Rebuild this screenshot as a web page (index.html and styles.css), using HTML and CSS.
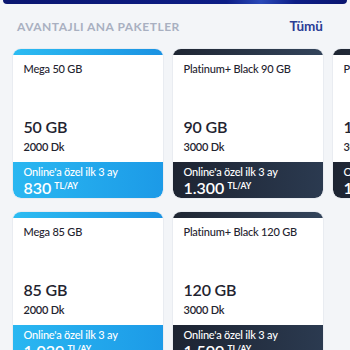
FILE: index.html
```html
<!DOCTYPE html>
<html lang="tr">
<head>
  <meta charset="UTF-8" />
  <meta name="viewport" content="width=device-width, initial-scale=1" />
  <title>Avantajlı Ana Paketler</title>
  <link rel="stylesheet" href="styles.css">
</head>
<body>
  <div class="hero"></div>

  <div class="section-head">
    <h2 class="section-title">AVANTAJLI ANA PAKETLER</h2>
    <a href="#" class="see-all">Tümü</a>
  </div>

  <div class="packages">
    <div class="card blue">
      <div class="card-top"></div>
      <div class="card-body">
        <div class="card-name">Mega 50 GB</div>
        <div class="card-info">
          <div class="gb">50 GB</div>
          <div class="dk">2000 Dk</div>
        </div>
      </div>
      <div class="card-price">
        <div class="promo">Online'a özel ilk 3 ay</div>
        <div class="price">830<span class="unit">TL/AY</span></div>
      </div>
    </div>

    <div class="card blue">
      <div class="card-top"></div>
      <div class="card-body">
        <div class="card-name">Mega 85 GB</div>
        <div class="card-info">
          <div class="gb">85 GB</div>
          <div class="dk">2000 Dk</div>
        </div>
      </div>
      <div class="card-price">
        <div class="promo">Online'a özel ilk 3 ay</div>
        <div class="price">1.020<span class="unit">TL/AY</span></div>
      </div>
    </div>

    <div class="card dark">
      <div class="card-top"></div>
      <div class="card-body">
        <div class="card-name">Platinum+ Black 90 GB</div>
        <div class="card-info">
          <div class="gb">90 GB</div>
          <div class="dk">3000 Dk</div>
        </div>
      </div>
      <div class="card-price">
        <div class="promo">Online'a özel ilk 3 ay</div>
        <div class="price">1.300<span class="unit">TL/AY</span></div>
      </div>
    </div>

    <div class="card dark">
      <div class="card-top"></div>
      <div class="card-body">
        <div class="card-name">Platinum+ Black 120 GB</div>
        <div class="card-info">
          <div class="gb">120 GB</div>
          <div class="dk">3000 Dk</div>
        </div>
      </div>
      <div class="card-price">
        <div class="promo">Online'a özel ilk 3 ay</div>
        <div class="price">1.500<span class="unit">TL/AY</span></div>
      </div>
    </div>

    <div class="card dark">
      <div class="card-top"></div>
      <div class="card-body">
        <div class="card-name">Platinum+ Black 160 GB</div>
        <div class="card-info">
          <div class="gb">160 GB</div>
          <div class="dk">3000 Dk</div>
        </div>
      </div>
      <div class="card-price">
        <div class="promo">Online'a özel ilk 3 ay</div>
        <div class="price">1.900<span class="unit">TL/AY</span></div>
      </div>
    </div>
  </div>
</body>
</html>
```

FILE: styles.css
```css
* {
  box-sizing: border-box;
  margin: 0;
  padding: 0;
}

body {
  font-family: Lato, 'Noto Sans', sans-serif;
  background-color: #f3f5f8;
  color: #1f2430;
  overflow: hidden;
}

.hero {
  height: 4px;
  margin: 0 3px;
  border-radius: 0 0 10px 10px;
  background: linear-gradient(90deg, #0a1670 0%, #0c1d86 65%, #2a49b8 75%, #0c1d86 85%, #0a1670 100%);
}

/* Section header */
.section-head {
  display: flex;
  justify-content: space-between;
  align-items: center;
  padding: 0 27px 0 17px;
  margin-top: 14px;
  height: 16px;
}

.section-title {
  font-size: 12px;
  font-weight: bold;
  letter-spacing: 0.5px;
  color: #a9b0c1;
}

.see-all {
  font-size: 13.5px;
  font-weight: bold;
  color: #2a3c95;
  text-decoration: none;
}

/* Package grid */
.packages {
  display: grid;
  grid-template-rows: auto auto;
  grid-auto-flow: column;
  grid-auto-columns: 150px;
  gap: 14px 10px;
  padding-left: 13px;
  margin-top: 15px;
}

.card {
  display: flex;
  flex-direction: column;
  height: 149px;
  background: #fff;
  border-radius: 8px;
  box-shadow: 0 0 0 1px #e9ecf1;
  overflow: hidden;
}

.card-top {
  height: 6px;
}

.card-body {
  flex-grow: 1;
  display: flex;
  flex-direction: column;
  justify-content: space-between;
  padding: 7px 10.5px 9px;
}

.card-name {
  font-size: 11px;
  font-weight: 500;
  letter-spacing: -0.2px;
  line-height: 14px;
}

.gb {
  font-size: 16px;
  font-weight: 600;
  letter-spacing: -0.2px;
  line-height: 19px;
}

.dk {
  font-size: 11px;
  font-weight: 600;
  letter-spacing: -0.2px;
  line-height: 13px;
  margin-top: 4px;
}

.card-price {
  height: 36px;
  padding: 3px 10.5px 0;
  color: #fff;
  border-radius: 0 0 8px 8px;
}

.promo {
  font-size: 11px;
  font-weight: 500;
  letter-spacing: -0.2px;
  line-height: 13px;
}

.price {
  font-size: 16px;
  font-weight: 600;
  line-height: 17px;
}

.unit {
  font-size: 8.5px;
  font-weight: bold;
  vertical-align: 5px;
  margin-left: 3px;
}

.blue .card-top {
  background: linear-gradient(90deg, #2cbcf2, #1b92e2);
}

.blue .card-price {
  background: linear-gradient(90deg, #2ab7f1, #1c9ae7);
}

.dark .card-top {
  background: linear-gradient(90deg, #1f2633, #33445b);
}

.dark .card-price {
  background: linear-gradient(90deg, #1d2432, #2b3a50);
}
```
